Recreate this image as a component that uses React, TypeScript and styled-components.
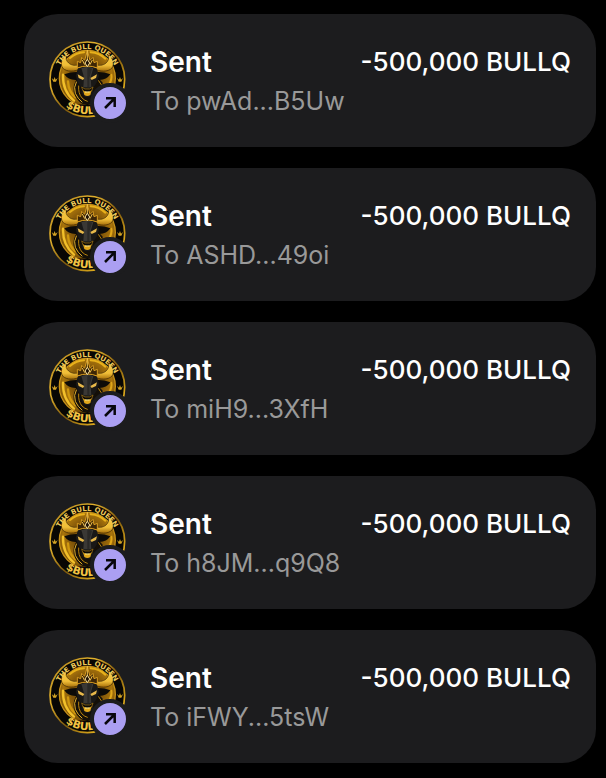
import React from "react";
import styled, { createGlobalStyle } from "styled-components";

const GlobalStyle = createGlobalStyle`
  body {
    margin: 0;
    background: #000;
    font-family: Inter, "Liberation Sans", sans-serif;
  }
`;

const List = styled.ul`
  display: flex;
  flex-direction: column;
  gap: 21px;
  margin: 0;
  padding: 14px 10px 15px 24px;
  list-style: none;
`;

const Card = styled.li`
  display: flex;
  align-items: flex-start;
  gap: 24px;
  padding: 27px 25px 28px;
  border-radius: 34px;
  background: #1c1c1e;
`;

const Avatar = styled.div`
  position: relative;
  flex: none;
  width: 77px;
  height: 77px;
`;

const Coin = styled.svg`
  display: block;
  width: 100%;
  height: 100%;
`;

const Badge = styled.span`
  position: absolute;
  right: -4px;
  bottom: -5px;
  display: flex;
  align-items: center;
  justify-content: center;
  width: 32px;
  height: 32px;
  border: 4px solid #1c1c1e;
  border-radius: 50%;
  background: #ab9ff2;
`;

const Details = styled.div`
  flex: 1;
  min-width: 0;
  display: flex;
  flex-direction: column;
`;

const TopLine = styled.div`
  display: flex;
  justify-content: space-between;
  align-items: flex-start;
  color: #fff;
  line-height: 42px;
  white-space: nowrap;
`;

const Title = styled.span`
  font-size: 28px;
  font-weight: 600;
`;

const Amount = styled.span`
  font-size: 26px;
  font-weight: 500;
`;

const Recipient = styled.span`
  font-size: 25px;
  line-height: 36px;
  color: #999;
`;

function CoinArt({ id }: { id: string }) {
  const ref = (name: string) => `${name}-${id}`;
  const url = (name: string) => `url(#${ref(name)})`;
  return (
    <Coin viewBox="27 27 231 231" role="img" aria-label="The Bull Queen">
      <defs>
        <linearGradient id={ref("rim")} x1="0" y1="0" x2="1" y2="1">
          <stop offset="0" stopColor="#a87c18" />
          <stop offset="0.3" stopColor="#e0b02c" />
          <stop offset="0.55" stopColor="#7d580c" />
          <stop offset="0.8" stopColor="#e0ac1c" />
          <stop offset="1" stopColor="#9a6d0c" />
        </linearGradient>
        <radialGradient id={ref("disc")} cx="0.5" cy="0.45" r="0.55">
          <stop offset="0" stopColor="#b5820f" />
          <stop offset="0.45" stopColor="#7a5008" />
          <stop offset="0.8" stopColor="#a8740c" />
          <stop offset="1" stopColor="#6a4606" />
        </radialGradient>
        <linearGradient id={ref("horn")} x1="0" y1="0" x2="0" y2="1">
          <stop offset="0" stopColor="#f8c840" />
          <stop offset="0.65" stopColor="#f0be38" />
          <stop offset="1" stopColor="#a8700a" />
        </linearGradient>
        <path id={ref("top")} d="M 51 142 A 91 91 0 0 1 233 142" />
        <path id={ref("bottom")} d="M 34 138 A 108 108 0 0 0 250 138" />
      </defs>

      <circle cx="142" cy="142" r="112" fill="#080704" />
      <circle cx="142" cy="139" r="84" fill={url("disc")} stroke="#c8921a" strokeWidth="4" />

      <g fill="none" strokeLinecap="round">
        <path d="M69 128 C68 160 80 188 102 206" stroke="#f2c02a" strokeWidth="7" />
        <path d="M84 148 C85 168 92 184 106 196" stroke="#d0980f" strokeWidth="7" />
        <path d="M214 128 C216 138 212 150 206 160" stroke="#e0a718" strokeWidth="6" />
        <path d="M90 78 Q109 62 132 61" stroke="#e9b21b" strokeWidth="6" />
        <path d="M152 61 Q178 63 196 80" stroke="#e9b21b" strokeWidth="6" />
      </g>

      <path d="M112 138 Q98 158 101 180 Q108 206 128 216 H184 L188 152 L172 134 Z" fill="#140f08" />
      <g fill="none" stroke="#b9840f" strokeWidth="3" strokeLinecap="round">
        <path d="M109 150 Q100 166 106 184 Q113 200 126 210" stroke="#e5b02a" />
        <path d="M116 162 Q114 184 126 198 Q134 206 142 208" />
        <path d="M176 146 Q188 158 186 173" />
      </g>

      <g fill={url("horn")} stroke="#3c2703" strokeWidth="2">
        <path d="M121 97 C108 102 95 101 86 93 C79 87 76 79 79 67 C65 78 60 96 68 108 C80 121 105 119 123 110 Z" />
        <path d="M163 97 C176 102 189 101 198 93 C205 87 208 79 205 67 C219 78 224 96 216 108 C204 121 179 119 161 110 Z" />
      </g>

      <path d="M118 120 Q94 118 73 127 Q86 147 116 143 Z M166 120 Q190 118 211 127 Q198 147 168 143 Z" fill="#0d0b08" />
      <path d="M114 108 Q142 98 170 108 L177 131 L170 152 L160 167 L159 184 L149 195 H135 L125 184 L124 167 L114 152 L107 131 Z" fill="#191817" />
      <path d="M124 108 L142 104 L160 108 L152 136 L154 166 H130 L132 136 Z" fill="#3a3835" />
      <path d="M142 106 L156 110 L148 138 V166 H142 Z" fill="#292826" />
      <path d="M113 127 L133 138 L129 144 L116 138 Z M171 127 L151 138 L155 144 L168 138 Z" fill="#e7b84a" />
      <path d="M125 165 L135 171 H149 L159 165 L155 177 L142 181 L129 177 Z" fill="#0a0907" stroke="#a77510" strokeWidth="2" />
      <path d="M129 175 Q142 187 155 175 L151 189 Q142 195 133 189 Z" fill="#e1a71b" />
      <path d="M135 180 H149" stroke="#fff099" strokeWidth="3" />

      <path d="M112 108 L112 88 L122 92 L125 76 L134 85 L142 56 L150 85 L159 76 L162 92 L172 88 L172 108 Q142 96 112 108 Z" fill="#3d2606" stroke="#d89c20" strokeWidth="3" />
      <path d="M142 54 V84 M127 84 L134 98 M157 84 L150 98" stroke="#f0c04a" strokeWidth="3" />
      <path d="M142 82 L149 93 L142 104 L135 93 Z" fill="#1f1206" stroke="#ffe59a" strokeWidth="3" />

      <g fill="#d3a324">
        <path d="M35 138 L41 143 L44 135 L47 143 L53 138 L48 149 H40 Z" />
        <path d="M231 138 L237 143 L240 135 L243 143 L249 138 L244 149 H236 Z" />
      </g>
      <path d="M74 204 Q108 222 142 216 Q180 222 210 204 L222 216 Q142 278 62 216 Z" fill="#080704" />
      <circle cx="142" cy="142" r="112" fill="none" stroke={url("rim")} strokeWidth="5" />
      <text fontFamily="DejaVu Sans" fontSize="21" fontWeight="700" fill="#edc858" textAnchor="middle">
        <textPath href={`#${ref("top")}`} startOffset="50%">THE BULL QUEEN</textPath>
      </text>
      <text fontFamily="DejaVu Sans" fontSize="32" fontWeight="700" fill="#f2c443" textAnchor="middle">
        <textPath href={`#${ref("bottom")}`} startOffset="50%">$BULLQ</textPath>
      </text>
    </Coin>
  );
}

function SendArrow() {
  return (
    <svg width="14" height="14" viewBox="0 0 14 14" fill="none" stroke="#08070c" strokeWidth="2.5" aria-hidden="true">
      <path d="M2 12 L11.5 2.5 M3 2.3 H11.7 V11" />
    </svg>
  );
}

const transactions = [
  { address: "pwAd...B5Uw" },
  { address: "ASHD...49oi" },
  { address: "miH9...3XfH" },
  { address: "h8JM...q9Q8" },
  { address: "iFWY...5tsW" },
];

export default function App() {
  return (
    <>
      <GlobalStyle />
      <List>
        {transactions.map(({ address }) => (
          <Card key={address}>
            <Avatar>
              <CoinArt id={address.slice(0, 4)} />
              <Badge>
                <SendArrow />
              </Badge>
            </Avatar>
            <Details>
              <TopLine>
                <Title>Sent</Title>
                <Amount>-500,000 BULLQ</Amount>
              </TopLine>
              <Recipient>To {address}</Recipient>
            </Details>
          </Card>
        ))}
      </List>
    </>
  );
}
